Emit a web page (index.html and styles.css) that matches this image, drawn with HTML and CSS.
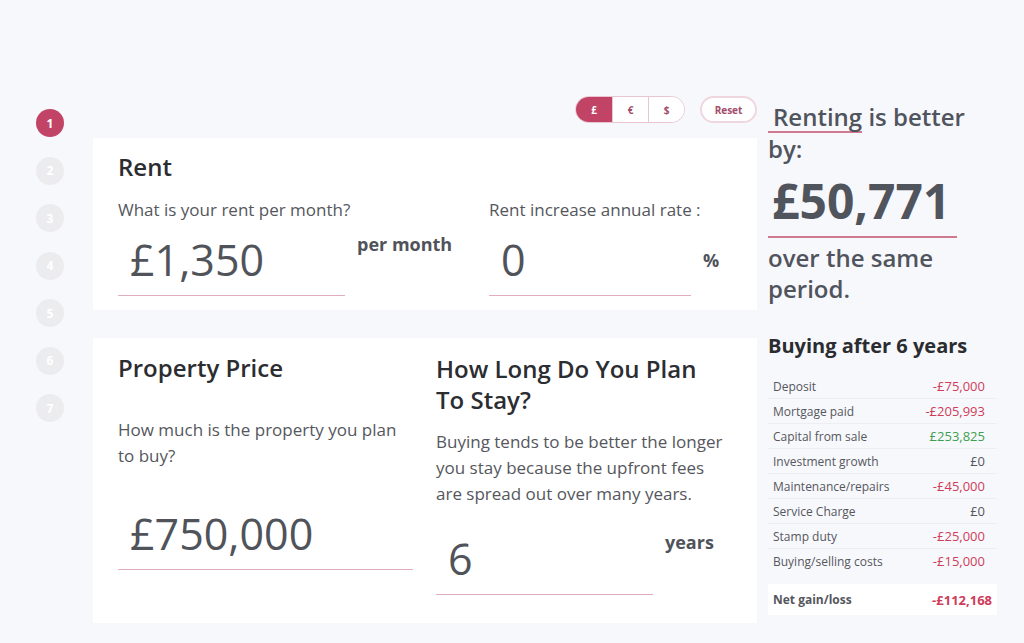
FILE: index.html
```html
<!DOCTYPE html>
<html lang="en">
<head>
    <meta charset="UTF-8">
    <meta name="viewport" content="width=device-width, initial-scale=1.0">
    <title>Rent vs Buy Calculator</title>
    <link rel="stylesheet" href="styles.css">
</head>
<body>
    <div class="calculator">
        <ol class="steps">
            <li class="step active">1</li>
            <li class="step">2</li>
            <li class="step">3</li>
            <li class="step">4</li>
            <li class="step">5</li>
            <li class="step">6</li>
            <li class="step">7</li>
        </ol>

        <div class="main">
            <div class="toolbar">
                <div class="currency">
                    <button class="currency-button active">£</button>
                    <button class="currency-button">€</button>
                    <button class="currency-button">$</button>
                </div>
                <button class="reset-button">Reset</button>
            </div>

            <section class="card rent-card">
                <div class="field rent-field">
                    <h2>Rent</h2>
                    <label for="rentInput">What is your rent per month?</label>
                    <div class="input-row">
                        <input id="rentInput" class="big-input rent-input" value="£1,350">
                        <span class="unit">per month</span>
                    </div>
                </div>
                <div class="field rate-field">
                    <label for="rateInput">Rent increase annual rate :</label>
                    <div class="input-row">
                        <input id="rateInput" class="big-input rate-input" value="0">
                        <span class="unit unit-low">%</span>
                    </div>
                </div>
            </section>

            <section class="card property-card">
                <div class="field price-field">
                    <h2>Property Price</h2>
                    <label for="priceInput" class="help">How much is the property you plan to buy?</label>
                    <div class="input-row">
                        <input id="priceInput" class="big-input price-input" value="£750,000">
                    </div>
                </div>
                <div class="field stay-field">
                    <h2>How Long Do You Plan To Stay?</h2>
                    <label for="stayInput" class="help">Buying tends to be better the longer you stay because the upfront fees are spread out over many years.</label>
                    <div class="input-row">
                        <input id="stayInput" class="big-input stay-input" value="6">
                        <span class="unit">years</span>
                    </div>
                </div>
            </section>
        </div>

        <aside class="summary">
            <p class="verdict verdict-top"><span class="verdict-word">Renting</span> is better<br>by:</p>
            <p class="difference">£50,771</p>
            <p class="verdict">over the same<br>period.</p>

            <h3>Buying after 6 years</h3>
            <table class="breakdown">
                <tr><td>Deposit</td><td class="neg">-£75,000</td></tr>
                <tr><td>Mortgage paid</td><td class="neg">-£205,993</td></tr>
                <tr><td>Capital from sale</td><td class="pos">£253,825</td></tr>
                <tr><td>Investment growth</td><td>£0</td></tr>
                <tr><td>Maintenance/repairs</td><td class="neg">-£45,000</td></tr>
                <tr><td>Service Charge</td><td>£0</td></tr>
                <tr><td>Stamp duty</td><td class="neg">-£25,000</td></tr>
                <tr><td>Buying/selling costs</td><td class="neg">-£15,000</td></tr>
            </table>
            <div class="net">
                <span>Net gain/loss</span>
                <span class="neg">-£112,168</span>
            </div>
        </aside>
    </div>
</body>
</html>
```

FILE: styles.css
```css
body {
    font-family: "Open Sans", "Noto Sans", Arial, sans-serif;
    background-color: #f7f8fc;
    color: #55575d;
    margin: 0;
    box-sizing: border-box;
}
.calculator {
    display: flex;
    padding: 96px 24px 0 0;
}
.steps {
    list-style: none;
    margin: 0;
    padding: 13px 0 0 7px;
    width: 93px;
    box-sizing: border-box;
    display: flex;
    flex-direction: column;
    align-items: center;
    gap: 19.5px;
}
.step {
    width: 28px;
    height: 28px;
    border-radius: 50%;
    background-color: #ececef;
    color: #fff;
    font-size: 12px;
    font-weight: 700;
    display: flex;
    align-items: center;
    justify-content: center;
}
.step.active {
    background-color: #c14467;
}
.main {
    width: 664px;
    display: flex;
    flex-direction: column;
}
.toolbar {
    display: flex;
    justify-content: flex-end;
    gap: 15px;
    height: 27px;
    margin-bottom: 15px;
}
.currency {
    display: flex;
    border: 1px solid #e9c6d2;
    border-radius: 14px;
    overflow: hidden;
    background: #fff;
}
.currency-button,
.reset-button {
    font-family: inherit;
    font-size: 10px;
    font-weight: 700;
    color: #a24c6b;
    background: #fff;
    border: none;
    padding: 0;
    cursor: pointer;
}
.currency-button {
    width: 36px;
    border-left: 1px solid #e9c6d2;
}
.currency-button:first-child {
    border-left: none;
}
.currency-button.active {
    background-color: #c14467;
    color: #fff;
}
.reset-button {
    width: 57px;
    border: 2px solid #f0d6df;
    border-radius: 14px;
}
.card {
    background-color: #fff;
    padding: 14px 25px 0 25px;
    display: flex;
}
.card h2 {
    font-size: 24px;
    line-height: 30px;
    font-weight: 600;
    color: #2b2d31;
    margin: 0;
}
.field label {
    display: block;
    font-size: 17px;
    line-height: 24px;
}
.input-row {
    display: flex;
    align-items: flex-start;
}
.big-input {
    font-family: inherit;
    font-size: 43px;
    font-weight: 400;
    color: #50535a;
    border: none;
    border-bottom: 1px solid #e0aebd;
    padding: 0 0 0 12px;
    height: 72px;
    outline: none;
    background: transparent;
    box-sizing: border-box;
}
.unit {
    font-size: 18px;
    font-weight: 700;
    color: #50535a;
    margin-left: 12px;
}
.rent-card {
    height: 172px;
    box-sizing: border-box;
}
.rent-field {
    width: 371px;
}
.rent-field label {
    margin-top: 16px;
}
.rent-field .input-row {
    margin-top: 2px;
}
.rent-input {
    width: 227px;
}
.rent-field .unit {
    margin-top: 8px;
}
.rate-field {
    padding-top: 46px;
}
.rate-field .input-row {
    margin-top: 2px;
}
.rate-input {
    width: 202px;
}
.unit-low {
    margin-top: 24px;
}
.property-card {
    margin-top: 28px;
    height: 285px;
    box-sizing: border-box;
    padding-top: 15px;
    gap: 23px;
}
.price-field,
.stay-field {
    width: 295px;
}
.help {
    line-height: 26px !important;
}
.price-field .help {
    margin-top: 34px;
}
.price-input {
    width: 295px;
    margin-top: 29px;
}
.stay-field h2 {
    line-height: 31px;
    padding-right: 20px;
}
.stay-field .help {
    margin-top: 14px;
}
.stay-input {
    width: 217px;
    padding-top: 16px;
    height: 88px;
}
.stay-field .unit {
    margin-top: 23px;
}
.summary {
    width: 232px;
    margin-left: 11px;
    padding-top: 5px;
}
.verdict {
    font-size: 24px;
    line-height: 31px;
    font-weight: 600;
    color: #50545c;
    margin: 0;
}
.verdict-top {
    line-height: 32px;
}
.verdict-word {
    display: inline-block;
    padding: 0 0 0 5px;
    line-height: 29px;
    border-bottom: 2px solid #d07a92;
}
.difference {
    font-size: 48px;
    font-weight: 700;
    color: #50545c;
    margin: 1px 0 0 0;
    width: 189px;
    padding-left: 4px;
    line-height: 70px;
    border-bottom: 2px solid #d07a92;
    box-sizing: border-box;
}
.summary .difference + .verdict {
    margin-top: 4px;
}
.summary h3 {
    font-size: 20px;
    line-height: 28px;
    font-weight: 700;
    color: #2a2c30;
    margin: 28px 0 14px 0;
}
.breakdown {
    width: 229px;
    border-collapse: collapse;
    font-size: 12px;
}
.breakdown td {
    height: 24px;
    padding: 0 12px 0 5px;
    border-bottom: 1px solid #eceef3;
    white-space: nowrap;
}
.breakdown tr:last-child td {
    border-bottom: none;
}
.breakdown td:last-child {
    text-align: right;
    font-size: 13px;
}
.neg {
    color: #cf3c5a;
}
.pos {
    color: #3e9f4f;
}
.net {
    width: 229px;
    margin-top: 11px;
    height: 31px;
    background: #fff;
    display: flex;
    justify-content: space-between;
    align-items: center;
    padding: 0 5px;
    box-sizing: border-box;
    font-size: 12px;
    font-weight: 700;
}
.net .neg {
    font-size: 13px;
}
```
